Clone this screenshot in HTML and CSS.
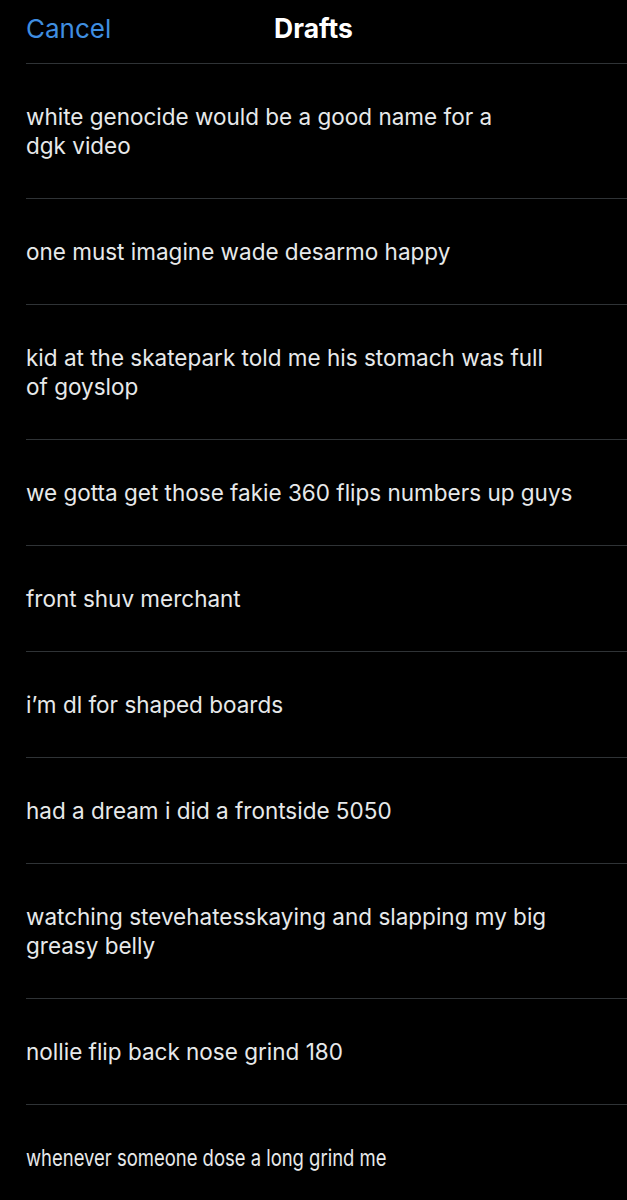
FILE: index.html
```html
<!doctype html>
<html lang="en">
<head>
  <meta charset="utf-8">
  <meta name="viewport" content="width=device-width,initial-scale=1">
  <title>Drafts</title>
  <link rel="stylesheet" href="styles.css">
</head>
<body>

  <header class="topbar">
    <button class="cancel" type="button">Cancel</button>
    <h1>Drafts</h1>
  </header>

  <ul class="drafts">
    <li>white genocide would be a good name for a<br>dgk video</li>
    <li>one must imagine wade desarmo happy</li>
    <li>kid at the skatepark told me his stomach was full<br>of goyslop</li>
    <li>we gotta get those fakie 360 flips numbers up guys</li>
    <li>front shuv merchant</li>
    <li>i’m dl for shaped boards</li>
    <li>had a dream i did a frontside 5050</li>
    <li>watching stevehatesskaying and slapping my big<br>greasy belly</li>
    <li>nollie flip back nose grind 180</li>
    <li><span class="squeezed">whenever someone dose a long grind me</span></li>
  </ul>

</body>
</html>
```

FILE: styles.css
```css
body{
  margin:0; background:#000; color:#e7e9ea;
  font-family:Inter,'Noto Sans',sans-serif;
  overflow:hidden;
}
.topbar{
  height:63px; margin-left:26px; position:relative;
  display:flex; align-items:center; justify-content:center;
  border-bottom:1px solid #2f3336;
}
.cancel{
  position:absolute; left:0; top:0; height:56px;
  background:none; border:none; padding:0;
  font:400 26px Inter,sans-serif; color:#3f8ee0;
}
.topbar h1{
  margin:0 0 7px -26px; font-size:26.5px; font-weight:700; color:#fff;
}
.drafts{ list-style:none; margin:0; padding:0 0 0 26px; }
.drafts li{
  padding:38px 26px 38px 0; line-height:29px; font-size:22.5px;
  border-bottom:1px solid #2f3336; white-space:nowrap;
}
.squeezed{ display:inline-block; transform:scaleX(.82); transform-origin:left center; }
```
